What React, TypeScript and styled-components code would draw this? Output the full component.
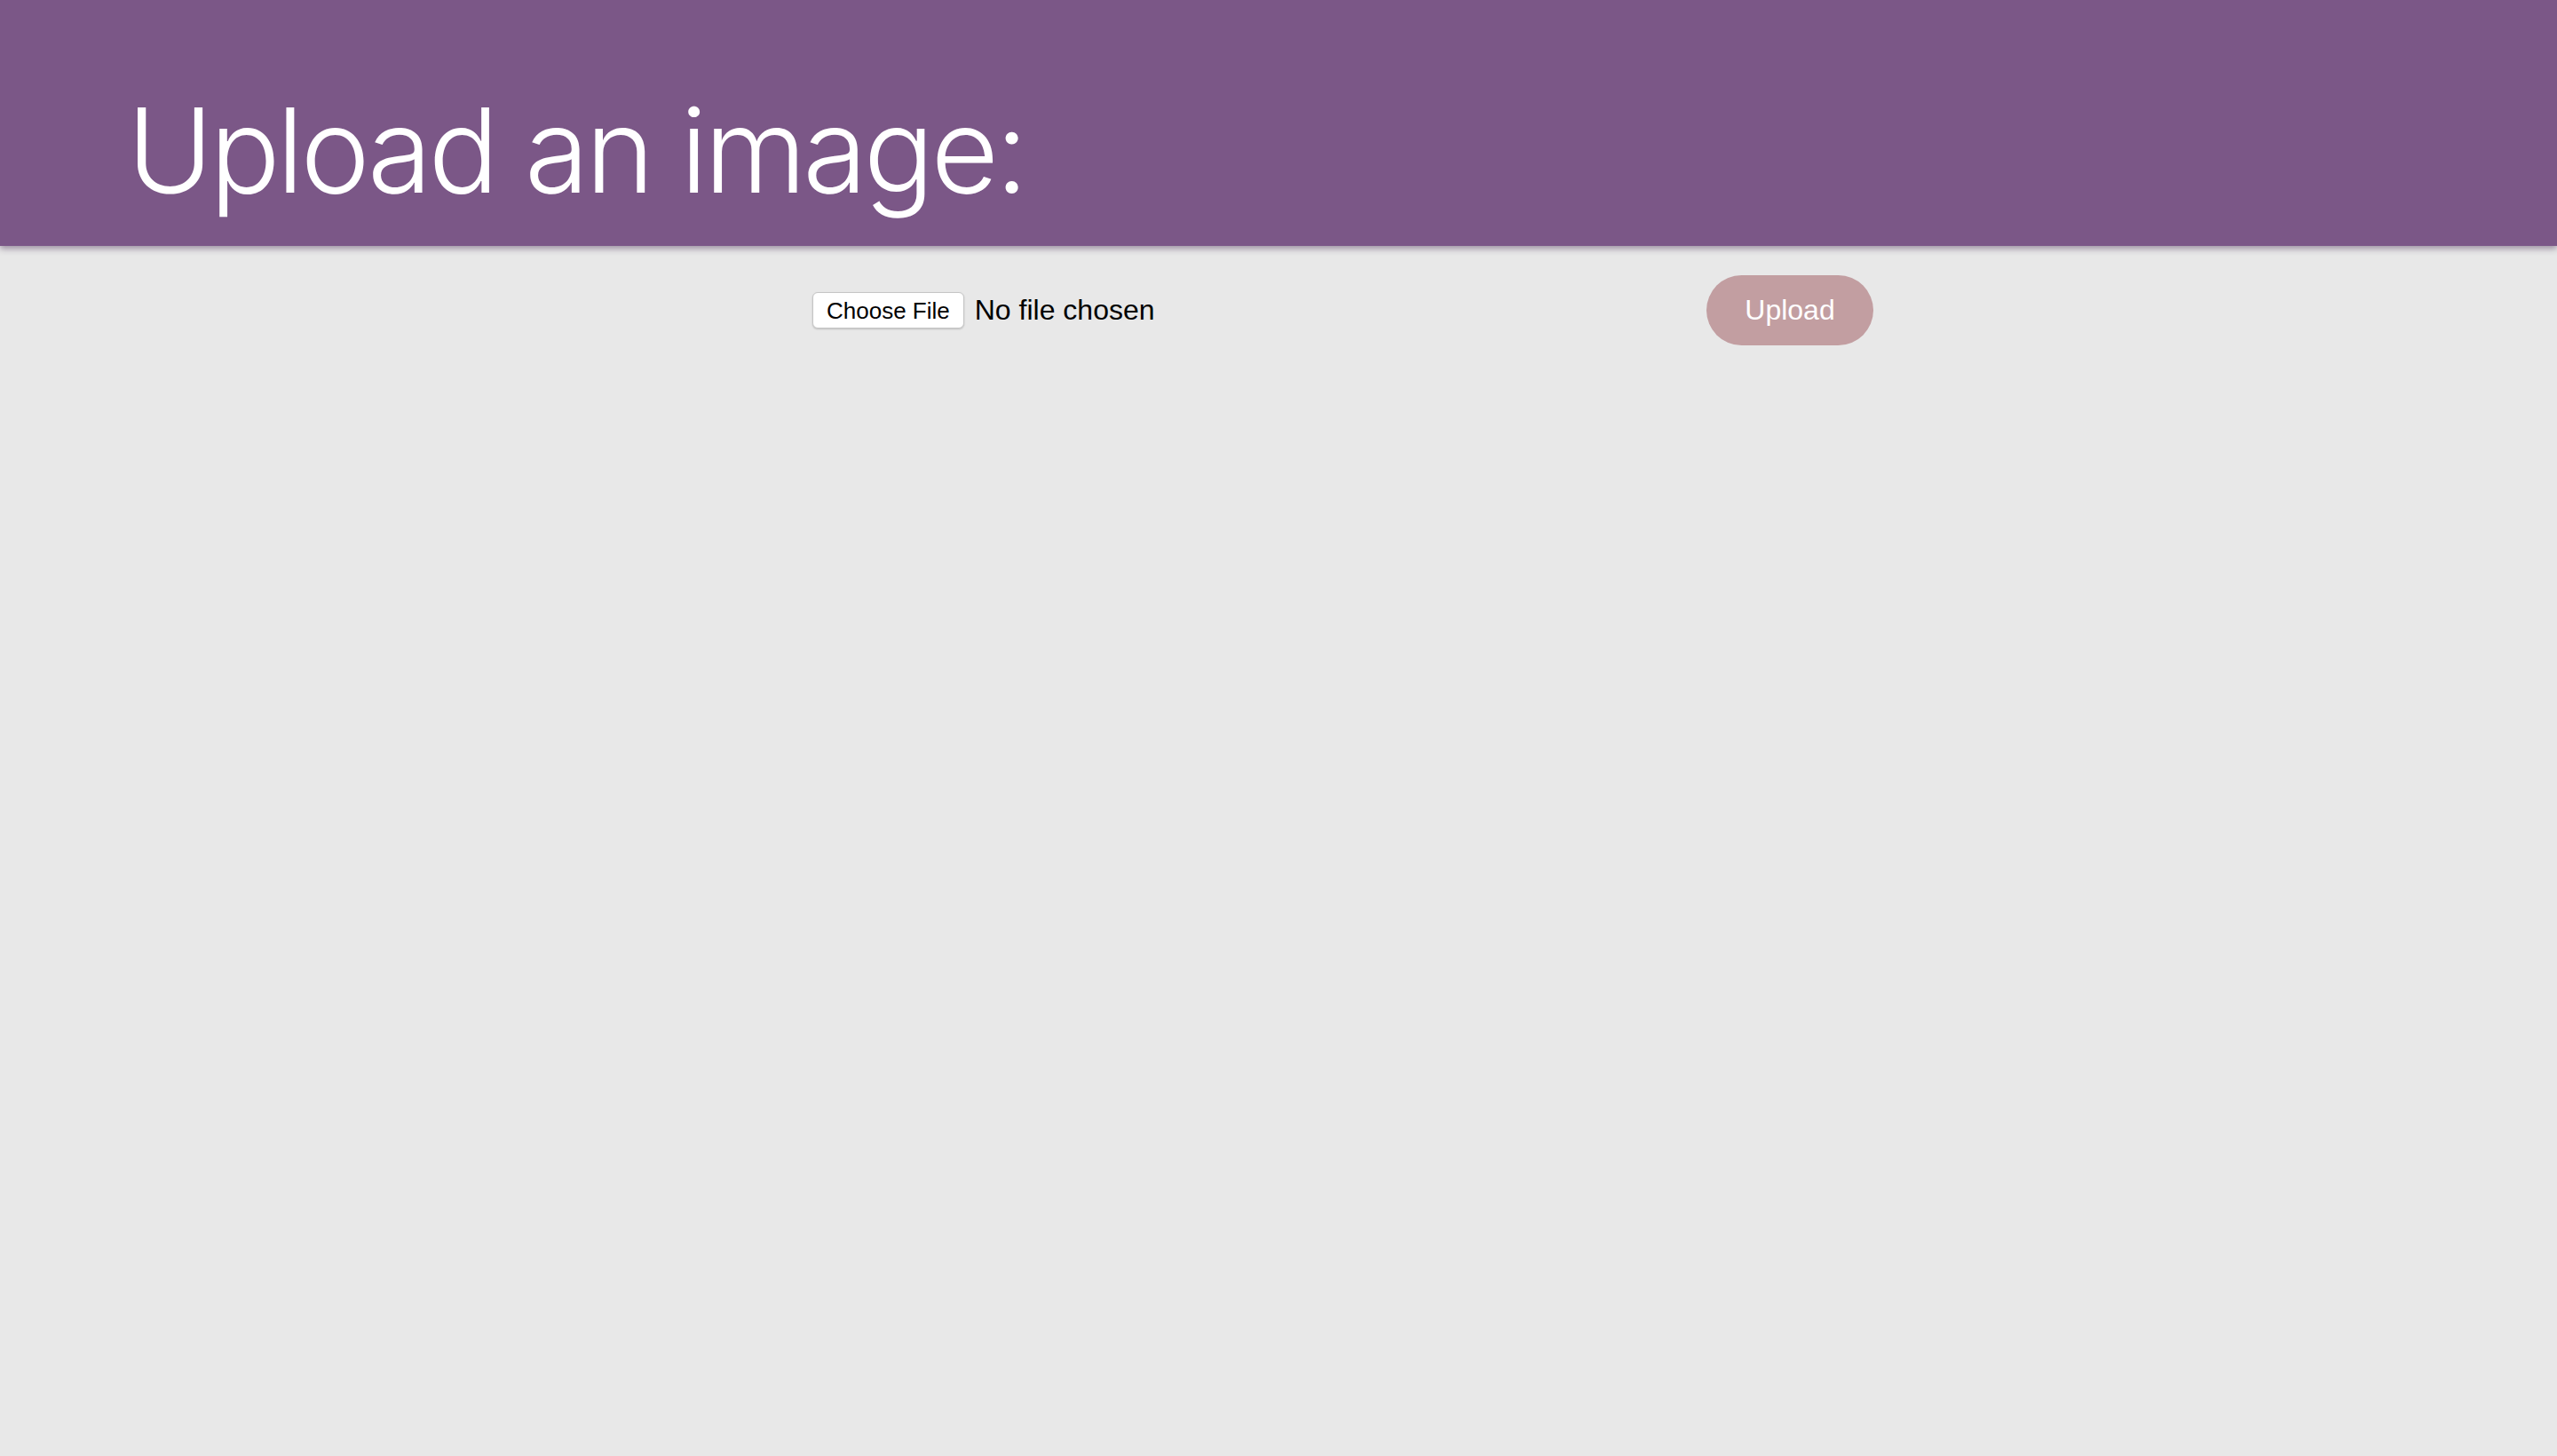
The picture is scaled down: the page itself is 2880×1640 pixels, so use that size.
import React from "react";
import styled, { createGlobalStyle } from "styled-components";

const GlobalStyle = createGlobalStyle`
  html, body {
    margin: 0;
    padding: 0;
    background: #e8e8e8;
    min-height: 100%;
  }
  body {
    font-family: "Liberation Sans", Arial, sans-serif;
    min-height: 1640px;
  }
`;

const Page = styled.div`
  min-height: 1640px;
  background: #e8e8e8;
`;

const Header = styled.header`
  background: #7b5787;
  height: 277px;
  box-sizing: border-box;
  padding: 102px 0 0 143px;
  box-shadow: 0 3px 7px rgba(60, 30, 70, 0.45);
  position: relative;
  z-index: 1;
`;

const Title = styled.h1`
  margin: 0;
  color: #ffffff;
  font-family: Inter, "Liberation Sans", Arial, sans-serif;
  font-weight: 300;
  font-size: 132px;
  line-height: 134px;
  letter-spacing: -4px;
`;

const Form = styled.form`
  display: flex;
  align-items: center;
  justify-content: space-between;
  width: 1195px;
  margin: 33px 0 0 915px;
`;

const FilePicker = styled.label`
  display: flex;
  align-items: center;
  gap: 12px;
  cursor: pointer;
`;

const HiddenInput = styled.input`
  display: none;
`;

const ChooseButton = styled.span`
  display: inline-flex;
  align-items: center;
  justify-content: center;
  box-sizing: border-box;
  height: 41px;
  padding: 2px 15px 0;
  background: #ffffff;
  border: 1px solid #c6c6c6;
  border-radius: 6px;
  box-shadow: 0 1px 2px rgba(0, 0, 0, 0.18);
  font-family: "Liberation Sans", Arial, sans-serif;
  font-size: 26px;
  color: #000000;
  white-space: nowrap;
`;

const FileStatus = styled.span`
  font-family: "Liberation Sans", Arial, sans-serif;
  font-size: 32px;
  color: #000000;
  white-space: nowrap;
`;

const UploadButton = styled.button`
  width: 188px;
  height: 79px;
  border: none;
  border-radius: 40px;
  background: #c29ea1;
  color: #ffffff;
  font-family: "Liberation Sans", Arial, sans-serif;
  font-size: 32px;
  cursor: pointer;
  padding: 0;
`;

export default function App() {
  return (
    <Page>
      <GlobalStyle />
      <Header>
        <Title>Upload an image:</Title>
      </Header>
      <Form onSubmit={(e) => e.preventDefault()}>
        <FilePicker>
          <HiddenInput type="file" accept="image/*" />
          <ChooseButton>Choose File</ChooseButton>
          <FileStatus>No file chosen</FileStatus>
        </FilePicker>
        <UploadButton type="submit">Upload</UploadButton>
      </Form>
    </Page>
  );
}
